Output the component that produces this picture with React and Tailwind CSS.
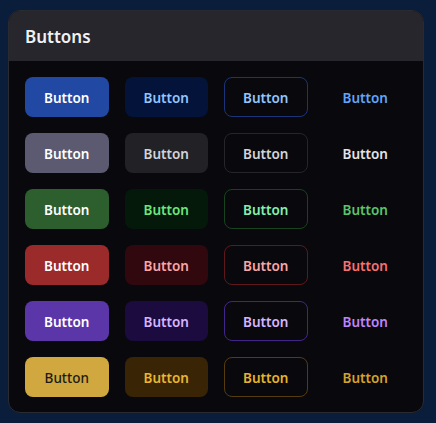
import React from 'react';

const rows = [
  {
    solid: 'bg-[#2149a3] text-white',
    soft: 'bg-[#03133a] text-[#93c5fd]',
    outline: 'border-[#1b3479] text-[#93c5fd]',
    ghost: 'text-[#60a5fa]',
  },
  {
    solid: 'bg-[#5b5a70] text-white',
    soft: 'bg-[#222226] text-[#d4d4d8]',
    outline: 'border-[#25252a] text-[#d4d4d8]',
    ghost: 'text-[#e4e4e7]',
  },
  {
    solid: 'bg-[#2c5e2e] text-white',
    soft: 'bg-[#05190b] text-[#6ee77a]',
    outline: 'border-[#17431e] text-[#86efac]',
    ghost: 'text-[#5cc46a]',
  },
  {
    solid: 'bg-[#9b2a2b] text-white',
    soft: 'bg-[#30080d] text-[#fca5a5]',
    outline: 'border-[#5e181c] text-[#fca5a5]',
    ghost: 'text-[#f87171]',
  },
  {
    solid: 'bg-[#5b36a8] text-white',
    soft: 'bg-[#1b0b3f] text-[#d8b4fe]',
    outline: 'border-[#42258a] text-[#d8b4fe]',
    ghost: 'text-[#c084fc]',
  },
  {
    solid: 'bg-[#d0a83f] text-[#1c1a14] !font-medium',
    soft: 'bg-[#392505] text-[#eab631]',
    outline: 'border-[#553b0e] text-[#e8b22c]',
    ghost: 'text-[#d4a32b]',
  },
];

const base = 'h-10 pt-[2px] rounded-lg text-[13.5px] font-semibold flex items-center justify-center';

export default function App() {
  return (
    <div
      className="w-[436px] h-[423px] bg-[#0a1d3b] pt-[10px] pl-2"
      style={{ fontFamily: '"Noto Sans", "Open Sans", sans-serif' }}
    >
      <div className="w-[416px] h-[403px] rounded-xl border border-[#2a2a31] bg-[#09090d] overflow-hidden">
        <div className="h-[50px] bg-[#26262c] px-4 pt-[2px] flex items-center">
          <h2 className="text-[17px] font-semibold text-[#f1f1f4]">Buttons</h2>
        </div>
        <div className="p-4 grid grid-cols-4 gap-4">
          {rows.map((r, i) => (
            <React.Fragment key={i}>
              <button className={`${base} ${r.solid}`}>Button</button>
              <button className={`${base} ${r.soft}`}>Button</button>
              <button className={`${base} border ${r.outline}`}>Button</button>
              <button className={`${base} ${r.ghost}`}>Button</button>
            </React.Fragment>
          ))}
        </div>
      </div>
    </div>
  );
}
